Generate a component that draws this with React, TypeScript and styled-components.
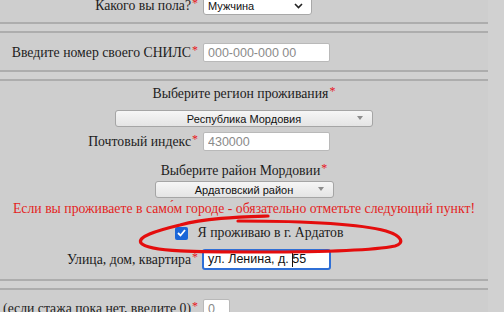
import React from "react";
import styled, { createGlobalStyle } from "styled-components";

const GlobalStyle = createGlobalStyle`
  html, body {
    margin: 0;
    padding: 0;
    background: #d1d1d1;
    overflow: hidden;
  }
  body {
    font-family: "Liberation Serif", "Times New Roman", serif;
    font-size: 13.75px;
    color: #1c1c1c;
  }
`;

const Page = styled.div`
  position: relative;
  width: 504px;
  height: 312px;
  overflow: hidden;
`;

const Form = styled.form`
  width: 488px;
  margin-top: -14px;
  display: flex;
  flex-direction: column;
  gap: 7px;
`;

const Section = styled.div<{ $pt: number; $pb: number }>`
  background: #cecece;
  border-top: 2px solid #adadad;
  border-bottom: 2px solid #adadad;
  padding: ${(p) => p.$pt}px 0 ${(p) => p.$pb}px;
  display: flex;
  flex-direction: column;
  align-items: center;
`;

const Row = styled.div<{ $mt?: number }>`
  align-self: stretch;
  display: grid;
  grid-template-columns: 198px 1fr;
  column-gap: 5px;
  align-items: center;
  margin-top: ${(p) => p.$mt ?? 0}px;
`;

const Label = styled.label`
  text-align: right;
  white-space: nowrap;
  line-height: 18px;
`;

const Req = styled.span`
  position: relative;
  top: -3px;
  color: #e8141c;
  font-size: 12px;
  line-height: 0;
  margin-left: 1px;
`;

const Title = styled.div<{ $mt?: number }>`
  line-height: 18px;
  margin-top: ${(p) => p.$mt ?? 0}px;
`;

const Warning = styled.div`
  color: #e41e1e;
  line-height: 18px;
  margin-top: 2px;
  white-space: nowrap;
`;

const Input = styled.input<{ $w: number }>`
  box-sizing: border-box;
  width: ${(p) => p.$w}px;
  height: 19px;
  padding: 0 4px;
  border: 1px solid #b9b9b9;
  border-radius: 2px;
  background: #fff;
  font-family: "Liberation Sans", Arial, sans-serif;
  font-size: 12.5px;
  color: #222;
  outline: none;
  &::placeholder {
    color: #8a8a8a;
  }
`;

const FocusedInput = styled.div`
  box-sizing: border-box;
  width: 129px;
  height: 21px;
  margin-left: -1px;
  padding: 0 4px;
  border: 2px solid #2f6fd6;
  border-radius: 3px;
  background: #fff;
  font-family: "Liberation Sans", Arial, sans-serif;
  font-size: 12.5px;
  line-height: 17px;
  color: #111;
  display: flex;
  align-items: center;
  white-space: pre;
`;

const Caret = styled.span`
  display: inline-block;
  width: 1px;
  height: 14px;
  background: #111;
  margin-right: -1px;
`;

const GenderSelect = styled.div`
  box-sizing: border-box;
  width: 109px;
  height: 18px;
  border: 1px solid #a8a8a8;
  border-radius: 3px;
  background: #fff;
  font-family: "Liberation Sans", Arial, sans-serif;
  font-size: 11px;
  color: #111;
  display: flex;
  align-items: center;
  justify-content: space-between;
  padding: 0 8px 0 4px;
`;

const RegionSelect = styled.div<{ $w: number; $mt: number }>`
  position: relative;
  box-sizing: border-box;
  width: ${(p) => p.$w}px;
  height: 17px;
  margin-top: ${(p) => p.$mt}px;
  border: 1px solid #a5a5a5;
  border-radius: 3px;
  background: linear-gradient(#f6f6f6, #e4e4e4);
  font-family: "Liberation Sans", Arial, sans-serif;
  font-size: 11px;
  color: #111;
  display: flex;
  align-items: center;
  justify-content: center;
`;

const Arrow = styled.span`
  position: absolute;
  right: 9px;
  top: 5px;
  width: 0;
  height: 0;
  border-left: 3px solid transparent;
  border-right: 3px solid transparent;
  border-top: 4px solid #8d8d8d;
`;

const CheckRow = styled.label`
  display: flex;
  align-items: center;
  gap: 10px;
  margin-top: 6px;
  margin-left: 30px;
  line-height: 18px;
`;

const Check = styled.span`
  box-sizing: border-box;
  width: 13px;
  height: 13px;
  border-radius: 2px;
  background: #1a66d8;
  display: flex;
  align-items: center;
  justify-content: center;
`;

const Scribble = styled.svg`
  position: absolute;
  left: 0;
  top: 0;
  pointer-events: none;
`;

export default function App() {
  return (
    <Page>
      <GlobalStyle />
      <Form>
        <Section $pt={9} $pb={7}>
          <Row>
            <Label>
              Какого вы пола?<Req>*</Req>
            </Label>
            <GenderSelect>
              <span>Мужчина</span>
              <svg width="9" height="6" viewBox="0 0 9 6">
                <path d="M1 1l3.5 3.5L8 1" fill="none" stroke="#222" strokeWidth="1.6" />
              </svg>
            </GenderSelect>
          </Row>
        </Section>

        <Section $pt={10} $pb={8}>
          <Row>
            <Label>
              Введите номер своего СНИЛС<Req>*</Req>
            </Label>
            <Input $w={127} placeholder="000-000-000 00" />
          </Row>
        </Section>

        <Section $pt={4} $pb={9}>
          <Title>
            Выберите регион проживания<Req>*</Req>
          </Title>
          <RegionSelect $w={258} $mt={7}>
            Республика Мордовия
            <Arrow />
          </RegionSelect>
          <Row $mt={5}>
            <Label>
              Почтовый индекс<Req>*</Req>
            </Label>
            <Input $w={127} placeholder="430000" />
          </Row>
          <Title $mt={11}>
            Выберите район Мордовии<Req>*</Req>
          </Title>
          <RegionSelect $w={179} $mt={1}>
            Ардатовский район
            <Arrow />
          </RegionSelect>
          <Warning>
            Если вы проживаете в само́м городе - обязательно отметьте следующий пункт!
          </Warning>
          <CheckRow>
            <Check>
              <svg width="9" height="8" viewBox="0 0 9 8">
                <path d="M1 4l2.5 2.5L8 1" fill="none" stroke="#fff" strokeWidth="1.8" />
              </svg>
            </Check>
            Я проживаю в г. Ардатов
          </CheckRow>
          <Row $mt={7}>
            <Label>
              Улица, дом, квартира<Req>*</Req>
            </Label>
            <FocusedInput>
              {"ул. Ленина, д. "}
              <Caret />
              55
            </FocusedInput>
          </Row>
        </Section>

        <Section $pt={9} $pb={9}>
          <Row>
            <Label>
              (если стажа пока нет, введите 0)<Req>*</Req>
            </Label>
            <Input $w={27} placeholder="0" />
          </Row>
        </Section>
      </Form>

      <Scribble width="504" height="312" viewBox="0 0 504 312">
        <path
          d="M268 216 C240 217 205 218 180 225 C155 231 137 237 141 243 C148 252 200 252 260 252 C320 252 370 251 395 246 C405 243 402 236 386 231 C360 224 300 221 238 221"
          fill="none"
          stroke="#e40d0d"
          strokeWidth="3.2"
          strokeLinecap="round"
        />
      </Scribble>
    </Page>
  );
}
